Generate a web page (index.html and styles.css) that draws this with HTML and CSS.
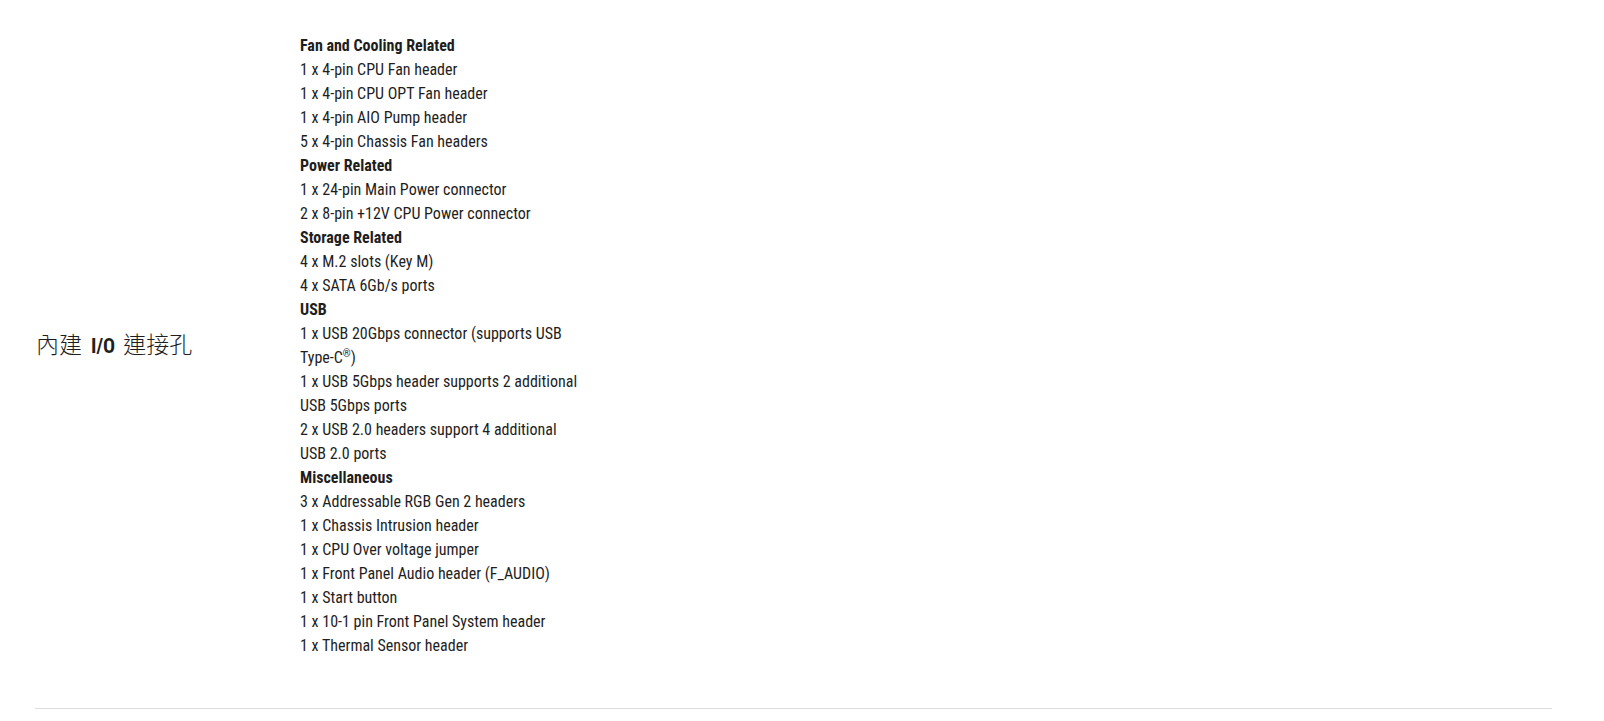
FILE: index.html
```html
<!DOCTYPE html>
<html lang="zh-Hant">
<head>
<meta charset="utf-8">
<title>內建 I/O 連接孔</title>
<link rel="stylesheet" href="styles.css">
</head>
<body>
<div class="spec">
  <div class="spec-row">
    <div class="spec-label">內建<b>I/O</b>連接孔</div>
    <div class="spec-value">
      <b>Fan and Cooling Related</b><br>
      1 x 4-pin CPU Fan header<br>
      1 x 4-pin CPU OPT Fan header<br>
      1 x 4-pin AIO Pump header<br>
      5 x 4-pin Chassis Fan headers<br>
      <b>Power Related</b><br>
      1 x 24-pin Main Power connector<br>
      2 x 8-pin +12V CPU Power connector<br>
      <b>Storage Related</b><br>
      4 x M.2 slots (Key M)<br>
      4 x SATA 6Gb/s ports<br>
      <b>USB</b><br>
      1 x USB 20Gbps connector (supports USB <span class="nw">Type-C<sup>®</sup>)</span><br>
      1 x USB 5Gbps header supports 2 additional USB 5Gbps ports<br>
      2 x USB 2.0 headers support 4 additional USB 2.0 ports<br>
      <b>Miscellaneous</b><br>
      3 x Addressable RGB Gen 2 headers<br>
      1 x Chassis Intrusion header<br>
      1 x CPU Over voltage jumper<br>
      1 x Front Panel Audio header (F_AUDIO)<br>
      1 x Start button<br>
      1 x 10-1 pin Front Panel System header<br>
      1 x Thermal Sensor header
    </div>
  </div>
</div>
</body>
</html>
```
FILE: styles.css
```css
html, body {
  margin: 0;
  padding: 0;
  background: #fff;
}
body {
  color: #1e1e1e;
  font-family: "Roboto Condensed", "Liberation Sans Narrow", Roboto, "Noto Sans CJK TC", sans-serif;
  font-stretch: condensed;
}
.spec {
  margin: 0 52px 0 35px;
}
.spec-row {
  display: flex;
  align-items: center;
  padding: 34px 0 50px;
  border-bottom: 1px solid #ddd;
}
.spec-label {
  width: 264px;
  padding: 0 0 6px 1px;
  flex: none;
  font-size: 23px;
  font-family: "Noto Sans CJK TC", sans-serif;
  font-weight: 300;
}
.spec-label b {
  font-family: "Roboto Condensed", Roboto, sans-serif;
  font-size: 20px;
  font-weight: 700;
  margin: 0 8px 0 9px;
}
.spec-value {
  width: 284px;
  font-size: 16px;
  line-height: 24px;
}
.spec-value b {
  font-weight: 700;
}
.nw {
  white-space: nowrap;
}
.spec-value sup {
  font-size: 10px;
  line-height: 0;
  vertical-align: 6px;
}
```
